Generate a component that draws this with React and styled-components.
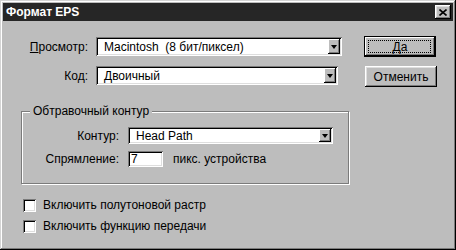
import React from "react";
import styled, { createGlobalStyle } from "styled-components";

const Global = createGlobalStyle`
  html, body { margin: 0; padding: 0; background: #bdbdbd; }
  body { font-family: "Liberation Sans", Arial, sans-serif; font-size: 12px; color: #000; }
  * { box-sizing: border-box; }
`;

const Window = styled.div`
  width: 456px;
  height: 250px;
  padding: 3px;
  background: #bdbdbd;
  display: flex;
  flex-direction: column;
  box-shadow: inset -1px -1px 0 #000, inset 1px 1px 0 #d4d4d4,
    inset -2px -2px 0 #7b7b7b, inset 2px 2px 0 #fff;
`;

const TitleBar = styled.div`
  height: 18px;
  flex: none;
  background: #262626;
  color: #fff;
  font-weight: bold;
  font-size: 12px;
  display: flex;
  align-items: center;
  justify-content: space-between;
  padding: 0 2px 0 3px;
`;

const CloseButton = styled.div`
  width: 16px;
  height: 14px;
  background: #bdbdbd;
  display: flex;
  align-items: center;
  justify-content: center;
  box-shadow: inset -1px -1px 0 #000, inset 1px 1px 0 #fff,
    inset -2px -2px 0 #7b7b7b, inset 2px 2px 0 #dedede;
`;

const Content = styled.div`
  flex: 1;
  display: flex;
  flex-direction: column;
  padding: 16px 16px 0 18px;
`;

const TopSection = styled.div`
  display: flex;
  align-items: flex-start;
`;

const FormGrid = styled.div`
  display: grid;
  grid-template-columns: ${(p) => p.$label}px auto;
  column-gap: ${(p) => p.$gap}px;
  row-gap: ${(p) => p.$rowGap}px;
  align-items: center;
  margin-top: ${(p) => p.$top || 0}px;
`;

const Label = styled.span`
  text-align: right;
  white-space: nowrap;
  line-height: 14px;
  u { text-decoration: underline; text-underline-offset: 1px; }
`;

const Combo = styled.div`
  width: ${(p) => p.$w}px;
  height: ${(p) => p.$h}px;
  background: #fff;
  display: flex;
  align-items: center;
  padding: 2px 2px 2px ${(p) => p.$pad}px;
  box-shadow: inset 1px 1px 0 #7b7b7b, inset -1px -1px 0 #fff,
    inset 2px 2px 0 #000, inset -2px -2px 0 #dedede;
`;

const ComboText = styled.span`
  flex: 1;
  white-space: pre;
  line-height: 14px;
`;

const DropButton = styled.div`
  width: 12px;
  align-self: stretch;
  background: #bdbdbd;
  display: flex;
  align-items: center;
  justify-content: center;
  box-shadow: inset -1px -1px 0 #000, inset 1px 1px 0 #fff,
    inset -2px -2px 0 #7b7b7b;
`;

const Arrow = styled.div`
  width: 0;
  height: 0;
  border-left: 3.5px solid transparent;
  border-right: 3.5px solid transparent;
  border-top: 4px solid #000;
  margin-top: 1px;
`;

const ButtonColumn = styled.div`
  margin-left: auto;
  display: flex;
  flex-direction: column;
  gap: 9px;
  margin-top: -1px;
`;

const Button = styled.div`
  width: 72px;
  height: 21px;
  display: flex;
  align-items: center;
  justify-content: center;
  position: relative;
  background: #bdbdbd;
  margin-left: ${(p) => (p.$default ? 0 : 1)}px;
  box-shadow: ${(p) =>
    p.$default
      ? "inset 0 0 0 1px #000, inset -2px -2px 0 #000, inset 2px 2px 0 #fff, inset -3px -3px 0 #7b7b7b"
      : "inset -1px -1px 0 #000, inset 1px 1px 0 #fff, inset -2px -2px 0 #7b7b7b, inset 2px 2px 0 #dedede"};
`;

const FocusRing = styled.div`
  position: absolute;
  inset: 4px 5px 4px 4px;
  border: 1px dotted #000;
  pointer-events: none;
`;

const GroupBox = styled.fieldset`
  margin: 17px 0 0 0;
  width: 328px;
  padding: 9px 0 16px 0;
  border: 1px solid #7b7b7b;
  box-shadow: inset 1px 1px 0 #fff, 1px 1px 0 #fff;
`;

const Legend = styled.legend`
  margin-left: 8px;
  padding: 0 3px 0 3px;
  line-height: 14px;
  background: #bdbdbd;
`;

const Input = styled.div`
  width: 35px;
  height: 16px;
  background: #fff;
  padding: 1px 3px;
  line-height: 14px;
  box-shadow: inset 1px 1px 0 #7b7b7b, inset -1px -1px 0 #fff,
    inset 2px 2px 0 #000, inset -2px -2px 0 #dedede;
`;

const InputRow = styled.div`
  display: flex;
  align-items: center;
  gap: 10px;
`;

const CheckList = styled.div`
  display: flex;
  flex-direction: column;
  gap: 7px;
  margin: 14px 0 0 2px;
`;

const CheckRow = styled.div`
  display: flex;
  align-items: center;
  gap: 7px;
  line-height: 14px;
`;

const CheckBox = styled.div`
  width: 13px;
  height: 13px;
  background: #fff;
  box-shadow: inset 1px 1px 0 #7b7b7b, inset -1px -1px 0 #fff,
    inset 2px 2px 0 #000, inset -2px -2px 0 #dedede;
`;

const ComboBox = ({ w, h, pad, children }) => (
  <Combo $w={w} $h={h} $pad={pad}>
    <ComboText>{children}</ComboText>
    <DropButton>
      <Arrow />
    </DropButton>
  </Combo>
);

export default function App() {
  return (
    <>
      <Global />
      <Window>
        <TitleBar>
          <span>Формат EPS</span>
          <CloseButton>
            <svg width="8" height="7" viewBox="0 0 8 7">
              <path d="M0.5 0.5 L7.5 6.5 M7.5 0.5 L0.5 6.5" stroke="#000" strokeWidth="1.6" />
            </svg>
          </CloseButton>
        </TitleBar>
        <Content>
          <TopSection>
            <FormGrid $label={67} $gap={8} $rowGap={10}>
              <Label>
                <u>П</u>росмотр:
              </Label>
              <ComboBox w={246} h={19} pad={8}>
                {"Macintosh  (8 бит/пиксел)"}
              </ComboBox>
              <Label>Код:</Label>
              <ComboBox w={242} h={19} pad={8}>
                Двоичный
              </ComboBox>
            </FormGrid>
            <ButtonColumn>
              <Button $default>
                Да
                <FocusRing />
              </Button>
              <Button>Отменить</Button>
            </ButtonColumn>
          </TopSection>
          <GroupBox>
            <Legend>Обтравочный контур</Legend>
            <FormGrid $label={97} $gap={9} $rowGap={7}>
              <Label>Контур:</Label>
              <ComboBox w={205} h={17} pad={8}>
                Head Path
              </ComboBox>
              <Label>Спрямление:</Label>
              <InputRow>
                <Input>7</Input>
                <span>пикс. устройства</span>
              </InputRow>
            </FormGrid>
          </GroupBox>
          <CheckList>
            <CheckRow>
              <CheckBox />
              <span>Включить полутоновой растр</span>
            </CheckRow>
            <CheckRow>
              <CheckBox />
              <span>Включить функцию передачи</span>
            </CheckRow>
          </CheckList>
        </Content>
      </Window>
    </>
  );
}
